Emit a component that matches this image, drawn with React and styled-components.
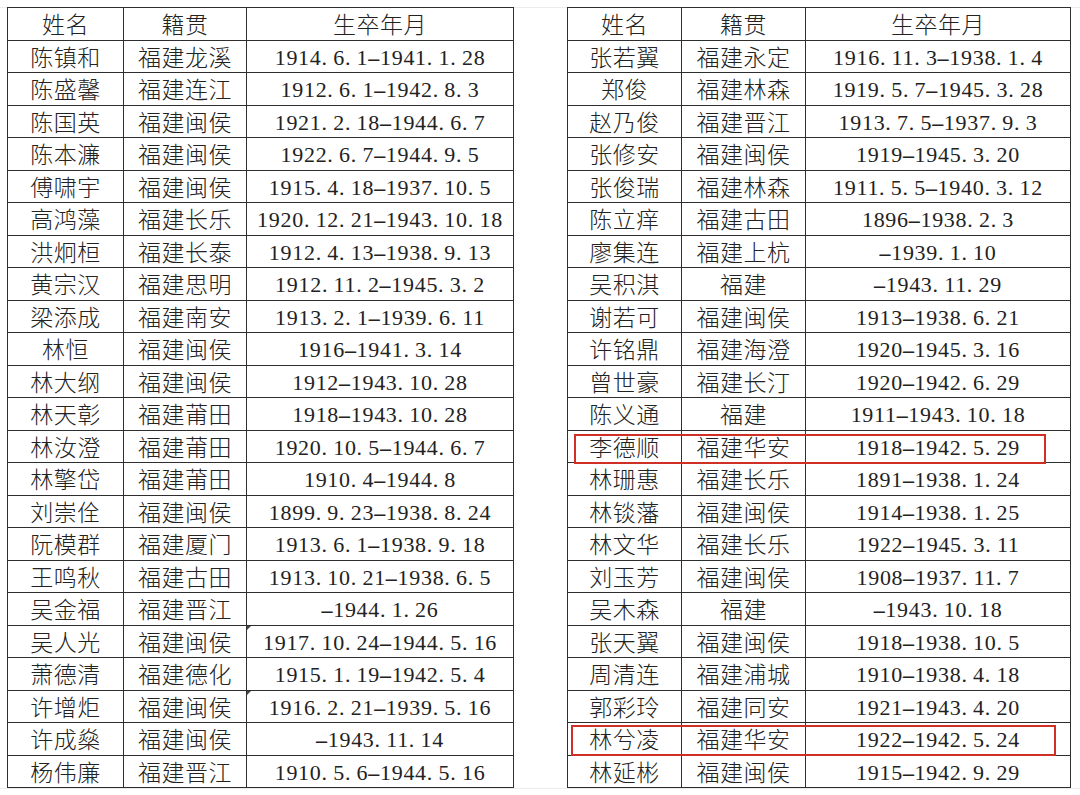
import React from "react";
import styled, { createGlobalStyle } from "styled-components";

const Global = createGlobalStyle`
  html, body { margin: 0; padding: 0; background: #ffffff; }
  body { width: 1080px; height: 795px; overflow: hidden; }
`;

const left = [
  ["陈镇和", "福建龙溪", "1914.6.1-1941.1.28"],
  ["陈盛馨", "福建连江", "1912.6.1-1942.8.3"],
  ["陈国英", "福建闽侯", "1921.2.18-1944.6.7"],
  ["陈本濂", "福建闽侯", "1922.6.7-1944.9.5"],
  ["傅啸宇", "福建闽侯", "1915.4.18-1937.10.5"],
  ["高鸿藻", "福建长乐", "1920.12.21-1943.10.18"],
  ["洪炯桓", "福建长泰", "1912.4.13-1938.9.13"],
  ["黄宗汉", "福建思明", "1912.11.2-1945.3.2"],
  ["梁添成", "福建南安", "1913.2.1-1939.6.11"],
  ["林恒", "福建闽侯", "1916-1941.3.14"],
  ["林大纲", "福建闽侯", "1912-1943.10.28"],
  ["林天彰", "福建莆田", "1918-1943.10.28"],
  ["林汝澄", "福建莆田", "1920.10.5-1944.6.7"],
  ["林擎岱", "福建莆田", "1910.4-1944.8"],
  ["刘崇佺", "福建闽侯", "1899.9.23-1938.8.24"],
  ["阮模群", "福建厦门", "1913.6.1-1938.9.18"],
  ["王鸣秋", "福建古田", "1913.10.21-1938.6.5"],
  ["吴金福", "福建晋江", "-1944.1.26"],
  ["吴人光", "福建闽侯", "1917.10.24-1944.5.16", true],
  ["萧德清", "福建德化", "1915.1.19-1942.5.4"],
  ["许增炬", "福建闽侯", "1916.2.21-1939.5.16", true],
  ["许成燊", "福建闽侯", "-1943.11.14"],
  ["杨伟廉", "福建晋江", "1910.5.6-1944.5.16"],
];

const right = [
  ["张若翼", "福建永定", "1916.11.3-1938.1.4"],
  ["郑俊", "福建林森", "1919.5.7-1945.3.28"],
  ["赵乃俊", "福建晋江", "1913.7.5-1937.9.3"],
  ["张修安", "福建闽侯", "1919-1945.3.20"],
  ["张俊瑞", "福建林森", "1911.5.5-1940.3.12"],
  ["陈立痒", "福建古田", "1896-1938.2.3"],
  ["廖集连", "福建上杭", "-1939.1.10"],
  ["吴积淇", "福建", "-1943.11.29"],
  ["谢若可", "福建闽侯", "1913-1938.6.21"],
  ["许铭鼎", "福建海澄", "1920-1945.3.16"],
  ["曾世豪", "福建长汀", "1920-1942.6.29"],
  ["陈义通", "福建", "1911-1943.10.18"],
  ["李德顺", "福建华安", "1918-1942.5.29"],
  ["林珊惠", "福建长乐", "1891-1938.1.24"],
  ["林锬藩", "福建闽侯", "1914-1938.1.25"],
  ["林文华", "福建长乐", "1922-1945.3.11"],
  ["刘玉芳", "福建闽侯", "1908-1937.11.7"],
  ["吴木森", "福建", "-1943.10.18"],
  ["张天翼", "福建闽侯", "1918-1938.10.5"],
  ["周清连", "福建浦城", "1910-1938.4.18"],
  ["郭彩玲", "福建同安", "1921-1943.4.20"],
  ["林兮凌", "福建华安", "1922-1942.5.24"],
  ["林延彬", "福建闽侯", "1915-1942.9.29"],
];

const Page = styled.div`
  display: flex;
  align-items: flex-start;
  gap: 53px;
  margin-top: 7px;
  padding-left: 7px;
  border-top: 1px solid #ececec;
  border-bottom: 1px solid #ececec;
  height: 780px;
`;

const Panel = styled.div`
  position: relative;
  margin-top: -1px;
`;

const Table = styled.table`
  border-collapse: collapse;
  table-layout: fixed;
  width: ${(p) => p.$width}px;
  border: 1.5px solid #505050;
  font-family: "Noto Sans CJK SC", "Noto Sans CJK JP", sans-serif;
  color: #222;
`;

const Row = styled.tr`
  height: 32.5px;
`;

const HeadCell = styled.th`
  border: 1px solid #2e2e2e;
  padding: 0;
  font-size: 23px;
  font-weight: 300;
  line-height: 1;
  text-align: center;
  vertical-align: middle;
  letter-spacing: 0.5px;
`;

const Cell = styled.td`
  position: relative;
  border: 1px solid #2e2e2e;
  padding: 0;
  font-size: 23px;
  font-weight: 300;
  line-height: 1;
  text-align: center;
  vertical-align: middle;
  white-space: nowrap;
  letter-spacing: ${(p) => (p.$date ? "0" : "0.5px")};

  &::before {
    content: "";
    display: ${(p) => (p.$flag ? "block" : "none")};
    position: absolute;
    left: 0;
    top: 0;
    width: 0;
    height: 0;
    border-top: 4px solid #444;
    border-right: 4px solid transparent;
  }
`;

const DateText = styled.span`
  display: inline-block;
  font-family: "Liberation Serif", "Times New Roman", serif;
  font-size: 22px;
  letter-spacing: 0.7px;
  color: #222;
  padding-top: 2px;
`;

const Dot = styled.span`
  margin-right: 5.5px;
`;

const Dash = styled.span`
  display: inline-block;
  transform: scaleY(1.4);
`;

const Highlight = styled.div`
  position: absolute;
  left: ${(p) => p.$x}px;
  top: ${(p) => p.$y}px;
  width: ${(p) => p.$w}px;
  height: ${(p) => p.$h}px;
  border: 2.75px solid #cf2f24;
  box-sizing: border-box;
  pointer-events: none;
`;

function DateValue({ text }) {
  const parts = [];
  text.split("").forEach((ch, i) => {
    if (ch === ".") parts.push(<Dot key={i}>.</Dot>);
    else if (ch === "-") parts.push(<Dash key={i}>–</Dash>);
    else parts.push(<span key={i}>{ch}</span>);
  });
  return <DateText>{parts}</DateText>;
}

function Roster({ rows, cols, width }) {
  return (
    <Table $width={width}>
      <colgroup>
        {cols.map((w, i) => (
          <col key={i} style={{ width: w }} />
        ))}
      </colgroup>
      <thead>
        <Row>
          <HeadCell>姓名</HeadCell>
          <HeadCell>籍贯</HeadCell>
          <HeadCell>生卒年月</HeadCell>
        </Row>
      </thead>
      <tbody>
        {rows.map(([name, place, date, flag]) => (
          <Row key={name}>
            <Cell>{name}</Cell>
            <Cell>{place}</Cell>
            <Cell $date $flag={flag}>
              <DateValue text={date} />
            </Cell>
          </Row>
        ))}
      </tbody>
    </Table>
  );
}

export default function App() {
  return (
    <>
      <Global />
      <Page>
        <Panel>
          <Roster rows={left} cols={[116, 123, 267]} width={506} />
        </Panel>
        <Panel>
          <Roster rows={right} cols={[114, 124, 265]} width={503} />
          <Highlight $x={7} $y={427} $w={472} $h={30} />
          <Highlight $x={4} $y={718} $w={485} $h={31} />
        </Panel>
      </Page>
    </>
  );
}
